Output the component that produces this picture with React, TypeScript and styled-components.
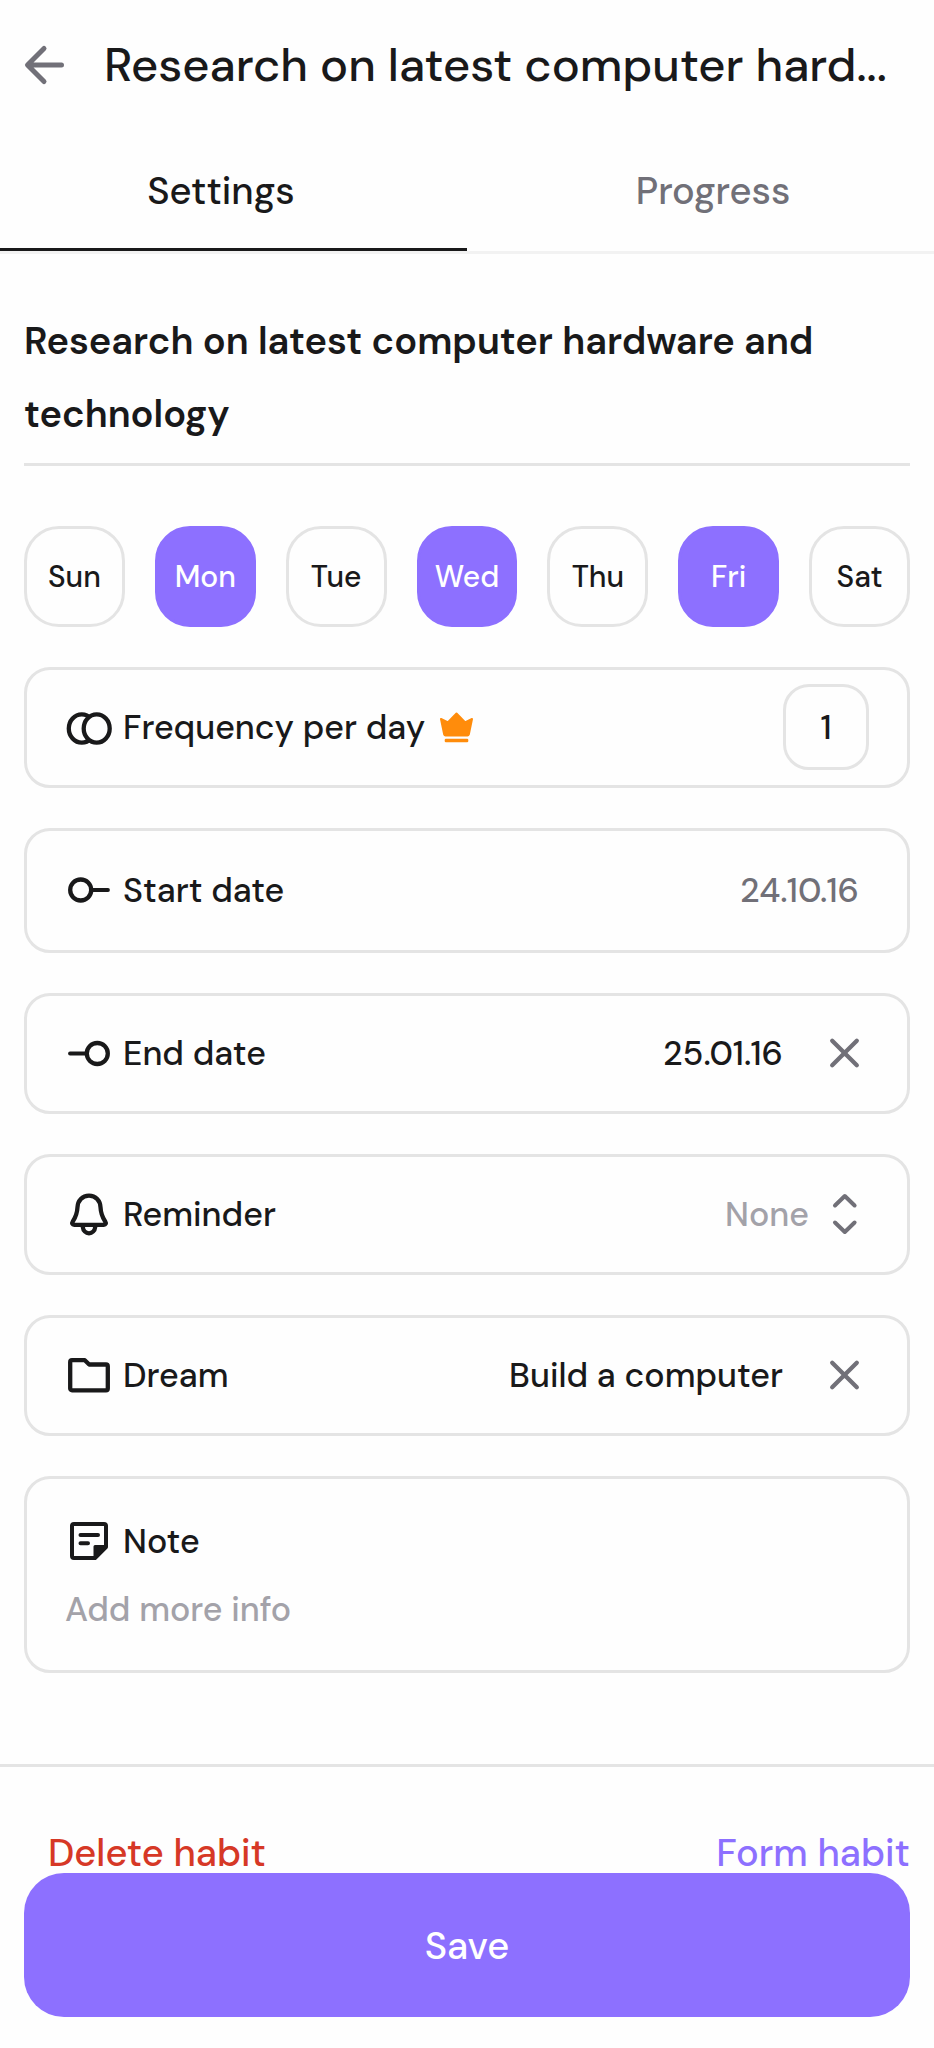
import React, { useState } from 'react';
import styled, { createGlobalStyle } from 'styled-components';

const color = {
  ink: '#19191a',
  muted: '#717078',
  faint: '#a3a2a9',
  line: '#e4e4e4',
  hairline: '#f2f2f2',
  accent: '#8d70ff',
  danger: '#d63826',
  crown: '#ff8c0b',
};

const GlobalStyle = createGlobalStyle`
  *, *::before, *::after { box-sizing: border-box; }
  body { margin: 0; background: #fefefe; }
  body, button, input, textarea, select {
    font-family: "DM Sans", Inter, "Liberation Sans", sans-serif;
    font-weight: 500;
    color: ${color.ink};
  }
  button, input, textarea, select {
    margin: 0;
    padding: 0;
    border: 0;
    background: none;
  }
  button, select { cursor: pointer; }
`;

const Page = styled.div`
  display: flex;
  flex-direction: column;
  min-height: 100vh;
`;

const Header = styled.header`
  display: flex;
  align-items: center;
  gap: 36px;
  height: 130px;
  padding: 0 24px 0 20px;
`;

const IconButton = styled.button`
  display: flex;
  flex: none;
  color: ${color.muted};
`;

const Title = styled.h1`
  flex: 1;
  min-width: 0;
  margin: 0;
  font-size: 47px;
  font-weight: 500;
  line-height: 64px;
  white-space: nowrap;
  overflow: hidden;
  text-overflow: ellipsis;
`;

const Tabs = styled.div`
  display: flex;
  border-bottom: 3px solid ${color.hairline};
`;

const Tab = styled.button<{ $active: boolean }>`
  flex: 1;
  height: 121px;
  padding-top: 4px;
  border-bottom: 3px solid ${(p) => (p.$active ? color.ink : 'transparent')};
  color: ${(p) => (p.$active ? color.ink : color.muted)};
  font-size: 38px;
  &:first-child { padding-right: 25px; }
  &:last-child { padding-left: 25px; }
`;

const Form = styled.main`
  display: flex;
  flex-direction: column;
  gap: 40px;
  padding: 51px 24px 91px;
`;

const NameField = styled.textarea`
  display: block;
  width: 100%;
  height: 161px;
  margin-bottom: 20px;
  padding-bottom: 12px;
  border-bottom: 3px solid ${color.line};
  font-size: 38px;
  font-weight: 600;
  line-height: 73px;
  resize: none;
  overflow: hidden;
  outline: none;
`;

const Days = styled.div`
  display: grid;
  grid-template-columns: repeat(7, 1fr);
  gap: 30px;
`;

const Day = styled.button<{ $on: boolean }>`
  aspect-ratio: 1;
  border: 3px solid ${(p) => (p.$on ? color.accent : color.line)};
  border-radius: 35px;
  background: ${(p) => (p.$on ? color.accent : 'transparent')};
  color: ${(p) => (p.$on ? '#fff' : color.ink)};
  font-size: 30px;
`;

const Card = styled.div<{ $tall?: boolean }>`
  display: flex;
  align-items: center;
  justify-content: space-between;
  min-height: ${(p) => (p.$tall ? 125 : 121)}px;
  padding: 0 38px;
  border: 3px solid ${color.line};
  border-radius: 26px;
`;

const NoteCard = styled(Card)`
  flex-direction: column;
  align-items: stretch;
  gap: 20px;
  padding: 38px 38px 37px;
`;

const Label = styled.label`
  display: flex;
  align-items: center;
  gap: 10px;
  font-size: 34px;
`;

const LabelText = styled.span`
  padding-top: 2px;
  line-height: 46px;
`;

const Control = styled.div<{ $tight?: boolean }>`
  display: flex;
  align-items: center;
  gap: ${(p) => (p.$tight ? 2 : 28)}px;
`;

const Value = styled.button<{ $muted?: boolean }>`
  padding: 2px 10px 0;
  color: ${(p) => (p.$muted ? color.muted : color.ink)};
  font-size: 34px;
  line-height: 46px;
`;

const Picker = styled.select`
  appearance: none;
  padding: 2px 10px 0;
  color: ${color.faint};
  font-size: 34px;
  line-height: 46px;
`;

const Count = styled.input`
  width: 86px;
  height: 86px;
  border: 3px solid ${color.line};
  border-radius: 26px;
  font-size: 34px;
  text-align: center;
`;

const NoteField = styled.textarea`
  display: block;
  height: 48px;
  padding-top: 2px;
  font-size: 34px;
  line-height: 46px;
  resize: none;
  overflow: hidden;
  outline: none;
  &::placeholder { color: ${color.faint}; opacity: 1; }
`;

const Footer = styled.footer`
  display: flex;
  flex-direction: column;
  padding: 67px 24px 31px;
  border-top: 3px solid ${color.line};
`;

const Actions = styled.div`
  display: flex;
  justify-content: space-between;
  padding-left: 24px;
`;

const TextButton = styled.button<{ $danger?: boolean }>`
  color: ${(p) => (p.$danger ? color.danger : color.accent)};
  font-size: 38px;
  line-height: 39px;
`;

const SaveButton = styled.button`
  height: 144px;
  padding-top: 2px;
  border-radius: 40px;
  background: ${color.accent};
  color: #fff;
  font-size: 38px;
`;

const Svg = styled.svg`
  display: block;
  flex: none;
  fill: none;
  stroke: currentColor;
  stroke-width: 4.3;
  stroke-linecap: round;
  stroke-linejoin: round;
`;

const Glyph = ({ children }: { children: React.ReactNode }) => (
  <Svg width="48" height="48" viewBox="0 0 48 48" aria-hidden="true">
    {children}
  </Svg>
);

const BackIcon = () => (
  <Glyph>
    <path strokeWidth="5" d="M24 7.5 7.5 24 24 40.5M9 24h32.5" />
  </Glyph>
);

const RepeatIcon = () => (
  <Glyph>
    <ellipse cx="16.8" cy="25.500" rx="13" ry="14.2" />
    <ellipse cx="31.7" cy="25.500" rx="13" ry="14.2" fill="#fefefe" />
  </Glyph>
);

const StartIcon = () => (
  <Glyph>
    <circle cx="15.7" cy="24" r="10.5" />
    <path strokeWidth="3.8" d="M27 24h16" />
  </Glyph>
);

const EndIcon = () => (
  <Glyph>
    <circle cx="32.3" cy="24.5" r="10.5" />
    <path strokeWidth="3.8" d="M5 24.5h16" />
  </Glyph>
);

const BellIcon = () => (
  <Glyph>
    <path d="M24 5.7c-6.8 0-11.2 5-11.5 11.5-.3 6.3-1.3 9.3-4.7 14.3-1.3 2-.4 3.3 1.4 3.3h29.6c1.8 0 2.7-1.3 1.4-3.3-3.4-5-4.4-8-4.7-14.3C35.2 10.7 30.8 5.7 24 5.7Z" />
    <path d="M17.8 37c.4 3.8 3.1 6.3 6.2 6.3s5.8-2.5 6.2-6.3" />
  </Glyph>
);

const FolderIcon = () => (
  <Glyph>
    <path d="M7 9.2h12.8l4.4 4.3H41a1.8 1.8 0 0 1 1.8 1.8v22.2a1.8 1.8 0 0 1-1.8 1.8H7a1.8 1.8 0 0 1-1.8-1.8V11A1.8 1.8 0 0 1 7 9.2Z" />
  </Glyph>
);

const NoteIcon = () => (
  <Glyph>
    <path strokeWidth="4" d="M9 7h30a2 2 0 0 1 2 2v21L30 41H9a2 2 0 0 1-2-2V9a2 2 0 0 1 2-2Z" />
    <path strokeWidth="4" d="M15.5 18h17.5M15.5 26.3h7.5" />
    <path stroke="none" fill="currentColor" d="M41.5 28H30a1.5 1.5 0 0 0-1.5 1.5V42h2L42 30.5Z" />
  </Glyph>
);

const CloseIcon = () => (
  <Glyph>
    <path d="m11.2 11.7 24.6 24.6m0-24.6L11.2 36.3" />
  </Glyph>
);

const SortIcon = () => (
  <Svg width="48" height="48" viewBox="0 0 48 48" color={color.muted} aria-hidden="true">
    <path strokeWidth="4" d="m14 15.5 9.8-9.5 9.8 9.5M14 32.5 23.8 42l9.8-9.5" />
  </Svg>
);

const Crown = styled.svg`
  flex: none;
  margin-left: 5px;
  fill: ${color.crown};
  stroke: ${color.crown};
  stroke-linejoin: round;
`;

const CrownIcon = () => (
  <Crown width="33" height="31" viewBox="0 0 33 31" role="img" aria-label="Premium">
    <path strokeWidth="2" d="m1 7 7 3.3L16.5 1.5 25 10.3 32 7l-3.2 15.5q-.3 1-1.3 1h-22q-1 0-1.3-1Z" />
    <rect x="4.7" y="26.8" width="23.6" height="3.4" rx="1.2" stroke="none" />
  </Crown>
);

const WEEK = ['Sun', 'Mon', 'Tue', 'Wed', 'Thu', 'Fri', 'Sat'];
const HABIT = 'Research on latest computer hardware and technology';
const TITLE_LENGTH = 32;

const shorten = (text: string) =>
  text.length > TITLE_LENGTH ? `${text.slice(0, TITLE_LENGTH)}...` : text;

export default function App() {
  const [tab, setTab] = useState('Settings');
  const [name, setName] = useState(HABIT);
  const [days, setDays] = useState(['Mon', 'Wed', 'Fri']);

  const toggleDay = (day: string) =>
    setDays((on) => (on.includes(day) ? on.filter((d) => d !== day) : [...on, day]));

  return (
    <Page>
      <GlobalStyle />
      <Header>
        <IconButton type="button" aria-label="Back">
          <BackIcon />
        </IconButton>
        <Title>{shorten(name)}</Title>
      </Header>

      <Tabs role="tablist">
        {['Settings', 'Progress'].map((title) => (
          <Tab
            key={title}
            type="button"
            role="tab"
            aria-selected={tab === title}
            $active={tab === title}
            onClick={() => setTab(title)}
          >
            {title}
          </Tab>
        ))}
      </Tabs>

      <Form>
        <NameField
          aria-label="Habit name"
          rows={2}
          value={name}
          onChange={(e) => setName(e.target.value)}
          spellCheck={false}
        />

        <Days role="group" aria-label="Days of the week">
          {WEEK.map((day) => (
            <Day
              key={day}
              type="button"
              aria-pressed={days.includes(day)}
              $on={days.includes(day)}
              onClick={() => toggleDay(day)}
            >
              {day}
            </Day>
          ))}
        </Days>

        <Card>
          <Label htmlFor="frequency">
            <RepeatIcon />
            <LabelText>Frequency per day</LabelText>
            <CrownIcon />
          </Label>
          <Count id="frequency" type="text" inputMode="numeric" defaultValue="1" />
        </Card>

        <Card $tall>
          <Label htmlFor="start">
            <StartIcon />
            <LabelText>Start date</LabelText>
          </Label>
          <Value id="start" type="button" $muted>
            24.10.16
          </Value>
        </Card>

        <Card>
          <Label htmlFor="end">
            <EndIcon />
            <LabelText>End date</LabelText>
          </Label>
          <Control>
            <Value id="end" type="button">
              25.01.16
            </Value>
            <IconButton type="button" aria-label="Clear end date">
              <CloseIcon />
            </IconButton>
          </Control>
        </Card>

        <Card>
          <Label htmlFor="reminder">
            <BellIcon />
            <LabelText>Reminder</LabelText>
          </Label>
          <Control $tight>
            <Picker id="reminder" defaultValue="None">
              <option>None</option>
            </Picker>
            <SortIcon />
          </Control>
        </Card>

        <Card>
          <Label htmlFor="dream">
            <FolderIcon />
            <LabelText>Dream</LabelText>
          </Label>
          <Control>
            <Value id="dream" type="button">
              Build a computer
            </Value>
            <IconButton type="button" aria-label="Clear dream">
              <CloseIcon />
            </IconButton>
          </Control>
        </Card>

        <NoteCard>
          <Label htmlFor="note">
            <NoteIcon />
            <LabelText>Note</LabelText>
          </Label>
          <NoteField id="note" rows={1} placeholder="Add more info" />
        </NoteCard>
      </Form>

      <Footer>
        <Actions>
          <TextButton type="button" $danger>
            Delete habit
          </TextButton>
          <TextButton type="button">Form habit</TextButton>
        </Actions>
        <SaveButton type="button">Save</SaveButton>
      </Footer>
    </Page>
  );
}
